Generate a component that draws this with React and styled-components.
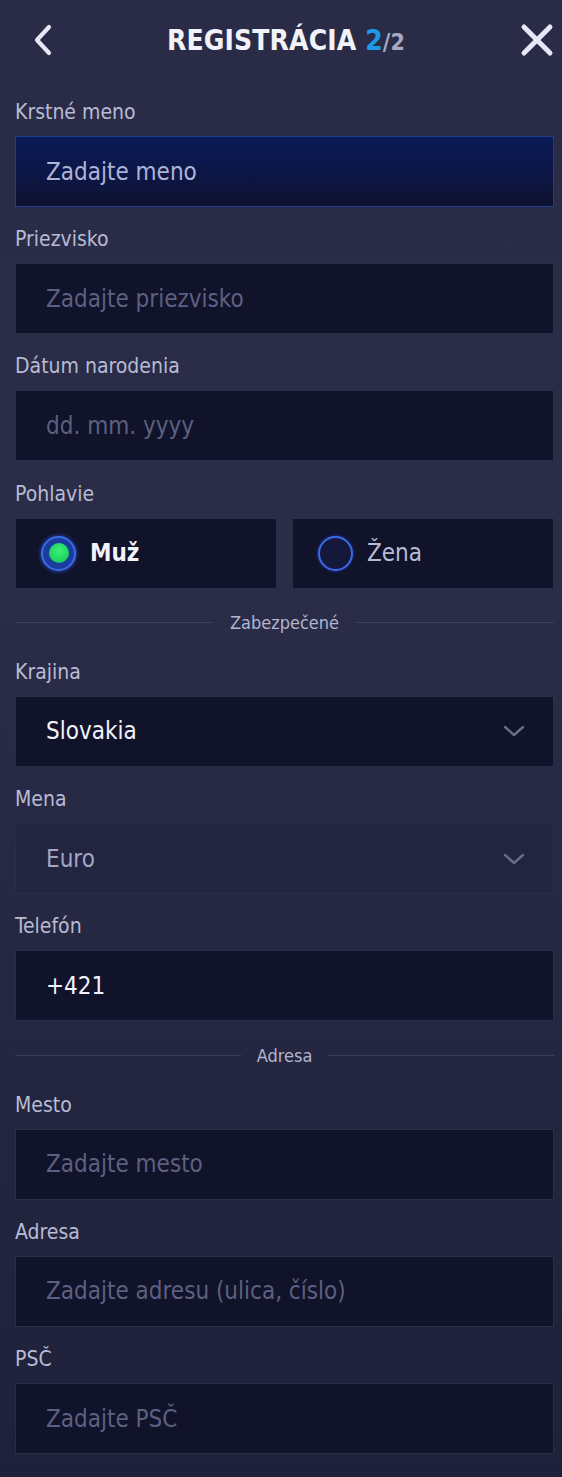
import styled, { createGlobalStyle } from "styled-components";

const GlobalStyle = createGlobalStyle`
    html, body {
        margin: 0;
        padding: 0;
        background: #24263f;
    }
    * {
        box-sizing: border-box;
    }
`;

const FONT = `"DejaVu Sans Condensed", "DejaVu Sans", sans-serif`;

const BackIcon = () => (
    <svg width="22" height="32" viewBox="0 0 22 32">
        <path d="M17 3 L5 16 L17 29" fill="none" stroke="#e6e7f5" strokeWidth="4.2" strokeLinecap="round" strokeLinejoin="round" />
    </svg>
);

const CloseIcon = () => (
    <svg width="34" height="34" viewBox="0 0 34 34">
        <path d="M4 4 L30 30 M30 4 L4 30" fill="none" stroke="#e6e7f5" strokeWidth="5" strokeLinecap="round" />
    </svg>
);

const Chevron = () => (
    <svg width="24" height="14" viewBox="0 0 24 14">
        <path d="M3 3 L12 11 L21 3" fill="none" stroke="#6a6d8a" strokeWidth="2.4" strokeLinecap="round" strokeLinejoin="round" />
    </svg>
);

const TextField = ({ label, placeholder, value, focused, dim, select }) => (
    <Field>
        <Label>{label}</Label>
        <InputBox $focused={focused} $dim={dim}>
            <InputText $kind={value ? (dim ? "dim" : "value") : focused ? "focus" : "placeholder"}>
                {value || placeholder}
            </InputText>
            {select && <Chevron />}
        </InputBox>
    </Field>
);

const App = () => {
    return (
        <Page>
            <GlobalStyle />
            <Header>
                <IconBtn><BackIcon /></IconBtn>
                <Title>
                    REGISTRÁCIA <Step>2</Step><Total>/2</Total>
                </Title>
                <IconBtn><CloseIcon /></IconBtn>
            </Header>

            <Form>
                <TextField label="Krstné meno" placeholder="Zadajte meno" focused />
                <TextField label="Priezvisko" placeholder="Zadajte priezvisko" />
                <TextField label="Dátum narodenia" placeholder="dd. mm. yyyy" />

                <Field>
                    <Label>Pohlavie</Label>
                    <RadioRow>
                        <RadioBox>
                            <Radio $checked />
                            <RadioText $checked>Muž</RadioText>
                        </RadioBox>
                        <RadioBox>
                            <Radio />
                            <RadioText>Žena</RadioText>
                        </RadioBox>
                    </RadioRow>
                </Field>

                <Divider><span>Zabezpečené</span></Divider>

                <TextField label="Krajina" value="Slovakia" select />
                <TextField label="Mena" value="Euro" dim select />
                <TextField label="Telefón" value="+421" />

                <Divider><span>Adresa</span></Divider>

                <TextField label="Mesto" placeholder="Zadajte mesto" />
                <TextField label="Adresa" placeholder="Zadajte adresu (ulica, číslo)" />
                <TextField label="PSČ" placeholder="Zadajte PSČ" />
            </Form>
        </Page>
    );
};

const Page = styled.div`
    width: 562px;
    min-height: 1477px;
    font-family: ${FONT};
    background: linear-gradient(180deg, #2a2c47 0%, #2a2c48 40%, #24253f 75%, #1f2039 100%);
    padding: 0 8px 22px 15px;
`;

const Header = styled.div`
    height: 80px;
    display: flex;
    align-items: center;
    justify-content: space-between;
    padding: 0 0 0 17px;
`;

const IconBtn = styled.div`
    display: flex;
    align-items: center;
    justify-content: center;
`;

const Title = styled.div`
    font-size: 28px;
    font-weight: 700;
    color: #f2f2fa;
    letter-spacing: 0.1px;
    margin-left: -2px;
`;

const Step = styled.span`
    color: #1e9be8;
`;

const Total = styled.span`
    color: #a7aac4;
    font-size: 23px;
`;

const Form = styled.div`
    display: flex;
    flex-direction: column;
    gap: 19.2px;
    padding-top: 19px;
`;

const Field = styled.div`
    display: flex;
    flex-direction: column;
    gap: 13px;
`;

const Label = styled.div`
    font-size: 21px;
    line-height: 22px;
    height: 24px;
    padding-top: 2px;
    color: #b8bbd4;
`;

const InputBox = styled.div`
    height: 71px;
    flex: none;
    display: flex;
    align-items: center;
    justify-content: space-between;
    padding: 0 27px 0 30px;
    border: 1px solid ${(p) => (p.$focused ? "#1f3c8c" : "#2a2d4a")};
    background: ${(p) =>
        p.$focused
            ? "linear-gradient(180deg, #0b1a55 0%, #0c1646 55%, #0f1230 100%)"
            : p.$dim
            ? "#222440"
            : "#11132a"};
`;

const InputText = styled.div`
    font-size: 24px;
    color: ${(p) =>
        p.$kind === "value"
            ? "#f1f2fa"
            : p.$kind === "dim"
            ? "#a3a6c2"
            : p.$kind === "focus"
            ? "#aeb4d8"
            : "#5d6080"};
`;

const RadioRow = styled.div`
    display: grid;
    grid-template-columns: 1fr 1fr;
    gap: 15px;
`;

const RadioBox = styled.div`
    height: 71px;
    display: flex;
    align-items: center;
    gap: 14px;
    padding-left: 25px;
    background: #11132a;
    border: 1px solid #2a2d4a;
`;

const Radio = styled.div`
    width: 35px;
    height: 35px;
    border-radius: 50%;
    border: 2px solid #3a6ae6;
    background: ${(p) => (p.$checked ? "#1a3c9c" : "#15183a")};
    display: flex;
    align-items: center;
    justify-content: center;
    box-shadow: ${(p) => (p.$checked ? "0 0 4px #2a55d0" : "0 0 3px #1d3fae")};
    &::after {
        content: "";
        display: ${(p) => (p.$checked ? "block" : "none")};
        width: 20px;
        height: 20px;
        border-radius: 50%;
        background: radial-gradient(circle at 50% 40%, #3ef07a 0%, #1fd760 60%, #18b552 100%);
    }
`;

const RadioText = styled.div`
    font-size: 24px;
    font-weight: ${(p) => (p.$checked ? 700 : 400)};
    color: ${(p) => (p.$checked ? "#f3f3fa" : "#b8bbd4")};
`;

const Divider = styled.div`
    display: flex;
    align-items: center;
    gap: 16px;
    margin: 4px 0 6px;
    height: 22px;
    span {
        font-size: 18px;
        color: #b2b5cf;
    }
    &::before, &::after {
        content: "";
        flex: 1;
        height: 1px;
        background: #3b3e5e;
    }
`;

export default App;
